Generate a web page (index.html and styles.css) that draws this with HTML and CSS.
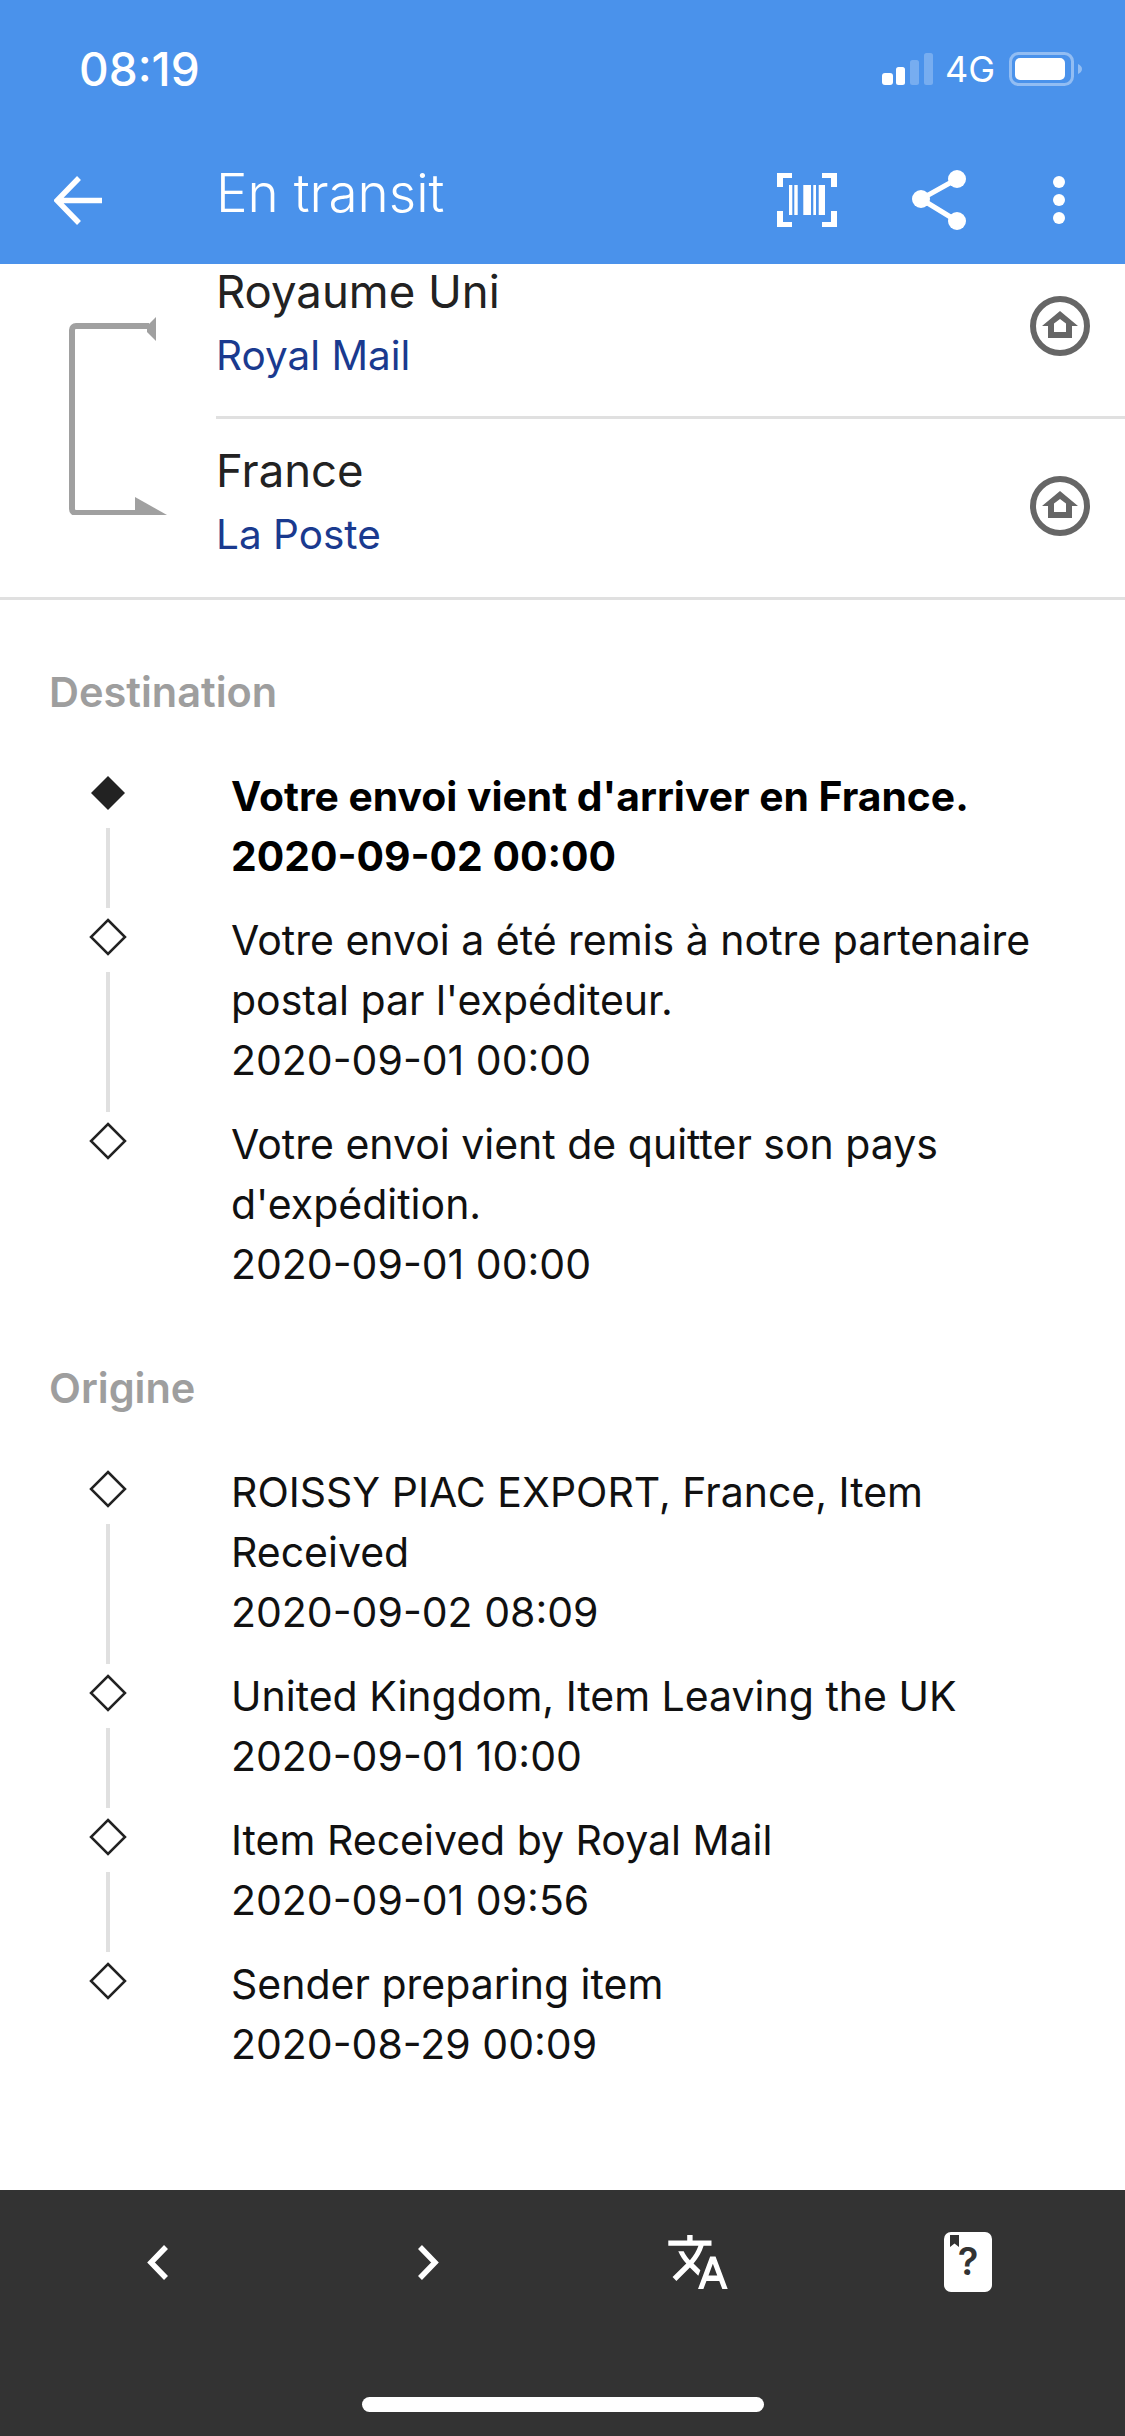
FILE: index.html
```html
<!DOCTYPE html>
<html lang="fr">
<head>
  <meta charset="UTF-8" />
  <meta name="viewport" content="width=device-width, initial-scale=1" />
  <title>En transit</title>
  <link rel="stylesheet" href="styles.css">
</head>
<body>

<header class="app-header">
  <div class="status-bar">
    <span class="status-time">08:19</span>
    <div class="status-icons">
      <svg class="signal" width="51" height="32" viewBox="0 0 51 32">
        <rect x="0" y="20" width="11" height="12" rx="3" fill="#fff"/>
        <rect x="14" y="14" width="9" height="18" rx="2.5" fill="#fff"/>
        <rect x="28" y="7" width="9" height="25" rx="2.5" fill="#fff" opacity=".25"/>
        <rect x="42" y="0" width="9" height="32" rx="2.5" fill="#fff" opacity=".25"/>
      </svg>
      <span class="status-net">4G</span>
      <svg class="battery" width="73" height="34" viewBox="0 0 73 34">
        <rect x="1.5" y="1.5" width="62" height="31" rx="8" fill="none" stroke="#fff" stroke-opacity=".4" stroke-width="3"/>
        <rect x="6" y="6" width="50" height="22" rx="5" fill="#fff"/>
        <path d="M69 12c2.500 1 4 3 4 5s-1.500 4-4 5z" fill="#fff" fill-opacity=".4"/>
      </svg>
    </div>
  </div>
  <div class="toolbar">
    <svg class="icon-back" width="48" height="49" viewBox="0 0 48 49">
      <path d="M25 2 3 24.500 25 47M3 24.500h45" fill="none" stroke="#fff" stroke-width="5.500"/>
    </svg>
    <h1 class="toolbar-title">En transit</h1>
    <svg class="icon-barcode" width="60" height="54" viewBox="0 0 60 54">
      <path d="M0 0h15v5H6v9H0zM45 0h15v14h-6V5h-9zM0 38h6v11h9v5H0zM54 38h6v16H45v-5h9z" fill="#fff"/>
      <path d="M12 12h3.300v30H12zM17.300 12h3.400v30h-3.400zM26.300 12H34v30h-7.700zM36.300 12H39v30h-2.700zM41.700 12H48v30h-6.300z" fill="#fff"/>
    </svg>
    <svg class="icon-share" width="54" height="60" viewBox="0 0 54 60">
      <path d="M45 9 9 29l36 22" fill="none" stroke="#fff" stroke-width="5"/>
      <circle cx="45" cy="9" r="9" fill="#fff"/>
      <circle cx="9" cy="29" r="9" fill="#fff"/>
      <circle cx="45" cy="51" r="9" fill="#fff"/>
    </svg>
    <svg class="icon-more" width="12" height="48" viewBox="0 0 12 48">
      <circle cx="6" cy="6" r="6" fill="#fff"/>
      <circle cx="6" cy="24" r="6" fill="#fff"/>
      <circle cx="6" cy="42" r="6" fill="#fff"/>
    </svg>
  </div>
</header>

<main class="content">
  <section class="route">
    <svg class="route-line" width="98" height="198" viewBox="0 0 98 198">
      <path d="M80 9H7a4 4 0 0 0-4 4v179a4 4 0 0 0 4 4h60" fill="none" stroke="#a0a0a0" stroke-width="6"/>
      <path d="M87 0v24l-9-9v-6z" fill="#a0a0a0"/>
      <path d="M66 180l32 18H66z" fill="#a0a0a0"/>
    </svg>
    <div class="route-rows">
      <div class="route-row route-row-first">
        <div class="route-text">
          <div class="route-country">Royaume Uni</div>
          <div class="route-carrier">Royal Mail</div>
        </div>
        <svg class="icon-home" width="60" height="60" viewBox="-30 -30 60 60">
          <circle r="27" fill="none" stroke="#666" stroke-width="6"/>
          <path fill-rule="evenodd" d="M0-15 18 0h-6v12h-24V0h-6zM0-7l-6 4.500V6H6v-8.500z" fill="#666"/>
        </svg>
      </div>
      <div class="route-row">
        <div class="route-text">
          <div class="route-country">France</div>
          <div class="route-carrier">La Poste</div>
        </div>
        <svg class="icon-home" width="60" height="60" viewBox="-30 -30 60 60">
          <circle r="27" fill="none" stroke="#666" stroke-width="6"/>
          <path fill-rule="evenodd" d="M0-15 18 0h-6v12h-24V0h-6zM0-7l-6 4.500V6H6v-8.500z" fill="#666"/>
        </svg>
      </div>
    </div>
  </section>

  <section class="history history-dest">
    <h2 class="history-title">Destination</h2>
    <ol class="events">
      <li class="event event-current">
        <div class="event-marker">
          <svg width="38" height="38" viewBox="0 0 38 38"><path d="M19 2 36 19 19 36 2 19z" fill="#222"/></svg>
          <span class="event-stem"></span>
        </div>
        <p class="event-text">Votre envoi vient d'arriver en France.<br>2020-09-02 00:00</p>
      </li>
      <li class="event">
        <div class="event-marker">
          <svg width="38" height="38" viewBox="0 0 38 38"><path d="M19 2 36 19 19 36 2 19z" fill="#fff" stroke="#222" stroke-width="2.500"/></svg>
          <span class="event-stem"></span>
        </div>
        <p class="event-text">Votre envoi a été remis à notre partenaire postal par l'expéditeur.<br>2020-09-01 00:00</p>
      </li>
      <li class="event">
        <div class="event-marker">
          <svg width="38" height="38" viewBox="0 0 38 38"><path d="M19 2 36 19 19 36 2 19z" fill="#fff" stroke="#222" stroke-width="2.500"/></svg>
        </div>
        <p class="event-text">Votre envoi vient de quitter son pays d'expédition.<br>2020-09-01 00:00</p>
      </li>
    </ol>
  </section>

  <section class="history history-origin">
    <h2 class="history-title">Origine</h2>
    <ol class="events">
      <li class="event">
        <div class="event-marker">
          <svg width="38" height="38" viewBox="0 0 38 38"><path d="M19 2 36 19 19 36 2 19z" fill="#fff" stroke="#222" stroke-width="2.500"/></svg>
          <span class="event-stem"></span>
        </div>
        <p class="event-text">ROISSY PIAC EXPORT, France, Item Received<br>2020-09-02 08:09</p>
      </li>
      <li class="event">
        <div class="event-marker">
          <svg width="38" height="38" viewBox="0 0 38 38"><path d="M19 2 36 19 19 36 2 19z" fill="#fff" stroke="#222" stroke-width="2.500"/></svg>
          <span class="event-stem"></span>
        </div>
        <p class="event-text">United Kingdom, Item Leaving the UK<br>2020-09-01 10:00</p>
      </li>
      <li class="event">
        <div class="event-marker">
          <svg width="38" height="38" viewBox="0 0 38 38"><path d="M19 2 36 19 19 36 2 19z" fill="#fff" stroke="#222" stroke-width="2.500"/></svg>
          <span class="event-stem"></span>
        </div>
        <p class="event-text">Item Received by Royal Mail<br>2020-09-01 09:56</p>
      </li>
      <li class="event">
        <div class="event-marker">
          <svg width="38" height="38" viewBox="0 0 38 38"><path d="M19 2 36 19 19 36 2 19z" fill="#fff" stroke="#222" stroke-width="2.500"/></svg>
        </div>
        <p class="event-text">Sender preparing item<br>2020-08-29 00:09</p>
      </li>
    </ol>
  </section>
</main>

<footer class="bottom-bar">
  <div class="bottom-icons">
    <div class="bottom-item">
      <svg width="22" height="35" viewBox="0 0 22 35"><path d="M19 2 4 17.500 19 33" fill="none" stroke="#fff" stroke-width="5.500"/></svg>
    </div>
    <div class="bottom-item">
      <svg width="22" height="35" viewBox="0 0 22 35"><path d="M3 2l15 15.500L3 33" fill="none" stroke="#fff" stroke-width="5.500"/></svg>
    </div>
    <div class="bottom-item">
      <svg width="60" height="54" viewBox="1 2 22 20"><path d="M12.870 15.070l-2.540-2.510.03-.03c1.740-1.940 2.980-4.170 3.710-6.530H17V4h-7V2H8v2H1v1.990h11.170C11.500 7.920 10.440 9.750 9 11.350 8.070 10.320 7.300 9.190 6.690 8h-2c.73 1.630 1.730 3.170 2.980 4.560l-5.090 5.020L4 19l5-5 3.110 3.110.76-2.040zM18.500 10h-2L12 22h2l1.120-3h4.750L21 22h2l-4.500-12zm-2.620 7l1.620-4.330L19.120 17h-3.240z" fill="#fff"/></svg>
    </div>
    <div class="bottom-item">
      <svg width="48" height="60" viewBox="0 0 48 60">
        <rect width="48" height="60" rx="7" fill="#fff"/>
        <path d="M6 3h9v12l-4.500-3.500L6 15z" fill="#333"/>
        <text class="help-mark" x="24" y="43" text-anchor="middle">?</text>
      </svg>
    </div>
  </div>
  <div class="home-indicator"></div>
</footer>

</body>
</html>
```

FILE: styles.css
```css
* {
  margin: 0; padding: 0; box-sizing: border-box;
}
html, body {
  height: 100%;
}
body {
  background: #fff;
  color: #111;
  font-family: Inter, "Noto Sans", sans-serif;
  display: flex;
  flex-direction: column;
  min-height: 100vh;
  overflow: hidden;
}
svg {
  display: block;
  flex-shrink: 0;
}

/* header */
.app-header {
  background: #4a92eb;
  color: white;
  height: 264px;
}
.status-bar {
  height: 136px;
  padding: 46px 43px 0 79px;
  display: flex;
  justify-content: space-between;
  align-items: flex-start;
}
.status-time {
  font-size: 46px;
  font-weight: 500;
  line-height: 46px;
}
.status-icons {
  display: flex;
  align-items: center;
  margin-top: 6px;
}
.status-net {
  font-size: 36px;
  line-height: 34px;
  margin-left: 12px;
  margin-right: 14px;
}
.toolbar {
  height: 128px;
  padding-left: 54px;
  display: flex;
  align-items: center;
}
.icon-back {
  margin-right: 114px;
}
.toolbar-title {
  flex-grow: 1;
  font-size: 53px;
  font-weight: 300;
  margin-top: -14px;
}
.icon-barcode {
  margin-right: 75px;
}
.icon-share {
  margin-right: 87px;
}
.icon-more {
  margin-right: 60px;
}

/* route */
.route {
  display: flex;
  border-bottom: 3px solid #e0e0e0;
}
.route-line {
  margin: 53px 49px 0 69px;
}
.route-rows {
  flex-grow: 1;
}
.route-row {
  height: 178px;
  padding-right: 35px;
  display: flex;
  justify-content: space-between;
}
.route-row-first {
  height: 155px;
  border-bottom: 3px solid #e0e0e0;
}
.route-row .route-text {
  padding-top: 21px;
}
.route-row-first .route-text {
  padding-top: 0;
  margin-top: -3px;
}
.route-country {
  font-size: 45.5px;
  line-height: 62px;
  color: #222;
}
.route-carrier {
  font-size: 40.5px;
  line-height: 62px;
  margin-top: 2px;
  color: #1a3a8f;
}
.route-row .icon-home {
  margin-top: 57px;
}
.route-row-first .icon-home {
  margin-top: 32px;
}

/* history */
.history-dest {
  padding-top: 62px;
}
.history-origin {
  padding-top: 40px;
}
.history-title {
  padding-left: 49px;
  font-size: 41.5px;
  font-weight: 600;
  line-height: 60px;
  color: #9e9e9e;
  margin-bottom: 44px;
}
.events {
  list-style: none;
}
.event {
  display: flex;
}
.event-marker {
  width: 96px;
  margin-left: 60px;
  margin-right: 75px;
  padding-top: 8px;
  display: flex;
  flex-direction: column;
  align-items: center;
  flex-shrink: 0;
}
.event-stem {
  flex-grow: 1;
  width: 4px;
  background: #e0e0e0;
  margin-top: 16px;
  margin-bottom: 2px;
}
.event-text {
  font-size: 41px;
  line-height: 60px;
  padding-bottom: 24px;
  padding-right: 70px;
}
.event-current .event-text {
  font-size: 40.8px;
  font-weight: 700;
  color: #000;
}

/* bottom bar */
.bottom-bar {
  margin-top: auto;
  height: 246px;
  background: #333;
  padding-top: 42px;
}
.bottom-icons {
  height: 60px;
  padding-left: 23px;
  display: flex;
}
.bottom-item {
  width: 270px;
  display: flex;
  justify-content: center;
  align-items: center;
}
.help-mark {
  font-family: Inter, sans-serif;
  font-size: 38px;
  font-weight: 600;
  fill: #333;
}
.home-indicator {
  width: 402px;
  height: 15px;
  margin: 105px 0 0 362px;
  background: white;
  border-radius: 8px;
}
```
